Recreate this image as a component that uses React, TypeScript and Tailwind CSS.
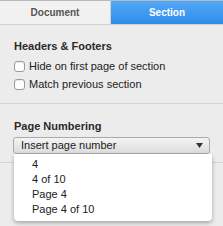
import { useState } from 'react'

const OPTIONS = ['4', '4 of 10', 'Page 4', 'Page 4 of 10']

function Check({ label }: { label: string }) {
  return (
    <label className="flex h-[18px] items-center gap-[4px]">
      <span className="h-[11px] w-[11px] rounded-[3px] border border-[#9a9a9a] bg-white shadow-[inset_0_1px_1px_rgba(0,0,0,0.08)]" />
      <span className="text-[11px] text-[#222]">{label}</span>
    </label>
  )
}

export default function App() {
  const [tab] = useState('section')

  return (
    <div
      className="relative h-[226px] w-[223px] overflow-hidden bg-[#ececec]"
      style={{ fontFamily: '"Liberation Sans", Arial, sans-serif' }}
    >
      {/* TABS */}
      <div className="grid h-[25px] grid-cols-[111px_1fr] border-t border-[#b9b9b9] border-b border-b-[#cfcfcf] text-[10px] font-bold">
        <div className="flex items-center justify-center border-r border-[#d2d2d2] bg-[#f1f1f1] text-[#555]">Document</div>
        <div
          className={`flex items-center justify-center text-white ${
            tab === 'section' ? 'bg-gradient-to-b from-[#52a8f7] to-[#2f8de9]' : ''
          }`}
        >
          Section
        </div>
      </div>

      {/* HEADERS & FOOTERS */}
      <div className="border-b border-[#d4d4d4] px-[14px] pb-[9px] pt-[13px]">
        <div className="mb-[3px] text-[11px] font-bold text-[#2a2a2a]">Headers &amp; Footers</div>
        <Check label="Hide on first page of section" />
        <Check label="Match previous section" />
      </div>

      {/* PAGE NUMBERING */}
      <div className="border-b border-[#d4d4d4] px-[13px] pb-[8px] pt-[14px]">
        <div className="mb-[3px] pl-[1px] text-[11px] font-bold text-[#2a2a2a]">Page Numbering</div>
        <div className="flex h-[17px] w-[197px] items-center justify-between rounded-[3px] border border-[#a9a9a9] bg-gradient-to-b from-[#f4f4f4] to-[#dcdcdc] pl-[7px] pr-[6px]">
          <span className="text-[11px] text-[#222]">Insert page number</span>
          <svg width="7" height="5" viewBox="0 0 7 5">
            <path d="M0 0h7L3.5 5z" fill="#333" />
          </svg>
        </div>
      </div>

      {/* MENU */}
      <div className="absolute left-[14px] top-[154px] w-[198px] rounded-b-[4px] bg-white pb-[4px] pt-[3px] shadow-[0_2px_4px_rgba(0,0,0,0.3)]">
        {OPTIONS.map((o) => (
          <div key={o} className="h-[15px] pl-[18px] text-[11px] leading-[15px] text-[#222]">
            {o}
          </div>
        ))}
      </div>
    </div>
  )
}
